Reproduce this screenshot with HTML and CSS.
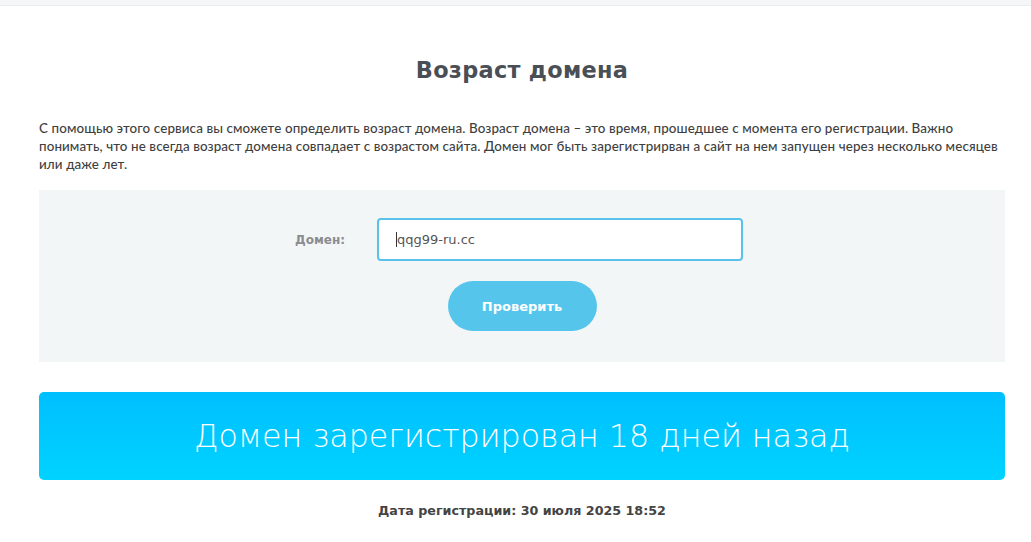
FILE: index.html
```html
<!DOCTYPE html>
<html lang="ru">
<head>
<meta charset="utf-8">
<link rel="stylesheet" href="styles.css">
</head>
<body>
<div class="topbar"></div>
<main class="container">
  <h1 class="title">Возраст домена</h1>
  <p class="intro">С помощью этого сервиса вы сможете определить возраст домена. Возраст домена – это время, прошедшее с момента его регистрации. Важно понимать, что не всегда возраст домена совпадает с возрастом сайта. Домен мог быть зарегистрирван а сайт на нем запущен через несколько месяцев или даже лет.</p>
  <form class="form-box">
    <div class="row">
      <label class="label">Домен:</label>
      <div class="input"><span class="caret"></span>qqg99-ru.cc</div>
    </div>
    <button type="button" class="btn">Проверить</button>
  </form>
  <div class="result">Домен зарегистрирован 18 дней назад</div>
  <p class="date">Дата регистрации: 30 июля 2025 18:52</p>
</main>
</body>
</html>
```
FILE: styles.css
```css
html, body { margin: 0; padding: 0; background: #fff; }
body { font-family: "Open Sans", "Noto Sans", sans-serif; color: #444; }
.topbar { height: 5px; background: #f5f6f8; border-bottom: 1px solid #ebedf0; }
.container { width: 966px; margin: 0 26px 0 39px; }
.title {
  font-family: "DejaVu Sans", sans-serif; font-weight: bold; font-size: 22.4px;
  color: #4a4f56; text-align: center; margin: 49px 0 0; line-height: 30px; letter-spacing: 0.3px;
}
.intro {
  font-family: "Lato", sans-serif; font-size: 13.4px; line-height: 18px; color: #3f3f3f;
  margin: 34px 0 0; font-weight: 500; letter-spacing: 0.1px;
}
.form-box {
  background: #f3f6f7; margin-top: 17px; height: 172px; box-sizing: border-box;
  padding-top: 28px; display: flex; flex-direction: column; align-items: center;
}
.row { display: flex; align-items: center; margin-left: -6px; }
.label {
  font-family: "DejaVu Sans", sans-serif; font-weight: bold; font-size: 12px; color: #8a8d90;
  width: 82px;
}
.input {
  width: 366px; height: 43px; box-sizing: border-box; border: 2px solid #5ac2ea; border-radius: 4px;
  background: #fff; display: flex; align-items: center; padding-left: 17px;
  font-family: "DejaVu Sans", sans-serif; font-size: 13px; color: #555;
}
.caret { width: 1px; height: 15px; background: #333; }
.btn {
  margin-top: 20px; width: 149px; height: 50px; border: none; border-radius: 25px;
  background: #56c5ec; color: #fff; font-family: "DejaVu Sans", sans-serif; font-weight: bold;
  font-size: 13px;
}
.result {
  margin-top: 30px; height: 88px; border-radius: 5px;
  background: linear-gradient(#00bfff, #00d3ff);
  color: #fff; font-family: "DejaVu Sans", sans-serif; font-weight: 300; font-size: 31.7px;
  display: flex; align-items: center; justify-content: center;
}
.date {
  text-align: center; font-family: "DejaVu Sans", sans-serif; font-weight: bold; font-size: 12.7px;
  color: #444; margin: 23px 0 0;
}
```
